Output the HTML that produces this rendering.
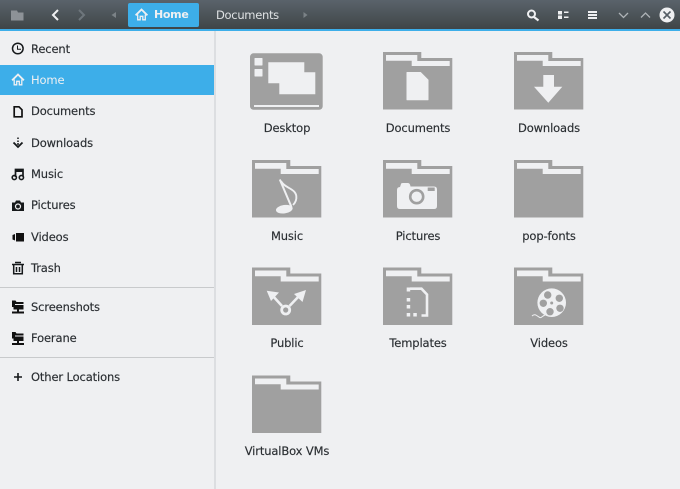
<!DOCTYPE html>
<html><head><meta charset="utf-8">
<style>
html,body{margin:0;padding:0}
body{width:680px;height:489px;overflow:hidden;position:relative;background:#eff0f2;font-family:"DejaVu Sans","Liberation Sans",sans-serif;font-size:11.5px;letter-spacing:-.13px;color:#2a2e32;-webkit-text-stroke:.15px #2a2e32}
.t{position:absolute;white-space:nowrap;line-height:16px}
.s{left:31px}
.l{width:130px;text-align:center}
svg{position:absolute;left:0;top:0}
</style></head><body>
<div style="position:absolute;left:0;top:0;width:680px;height:29px;background:linear-gradient(#5a636b,#3f4547)"></div>
<div style="position:absolute;left:0;top:29px;width:680px;height:2px;background:#3daee9"></div>
<div style="position:absolute;left:214px;top:31px;width:2px;height:458px;background:#dcdee1"></div>
<div style="position:absolute;left:0;top:65px;width:214px;height:30px;background:#3daee9"></div>
<div style="position:absolute;left:0;top:287px;width:214px;height:1px;background:#c8cacc"></div>
<div style="position:absolute;left:0;top:357px;width:214px;height:1px;background:#c8cacc"></div>
<div style="position:absolute;left:128px;top:3px;width:71px;height:24px;background:#3daee9;border-radius:2px"></div>

<svg width="680" height="489" viewBox="0 0 680 489">
<defs>
<g id="f">
<path d="M0 0H38.300V6H69.300V57.500H0Z" fill="#a0a0a0"/>
<path d="M3 3H34.300V9H66.700V14H28.700V8.700H3Z" fill="#eff0f2"/>
</g>
<g id="h" fill="none" stroke="#eff0f2">
<path d="M.6 6.800L6.500 1L12.400 6.800" stroke-width="1.800"/>
<path d="M2.700 6V11.300H5.200V7.800H7.800V11.300H10.300V6" stroke-width="1.300"/>
</g>
</defs>
<!-- header icons -->
<path d="M11 10.500H17L18 12.500H23.500V20.500H11Z" fill="#8d9297"/>
<path d="M58 10L53 15L58 20" fill="none" stroke="#eff0f2" stroke-width="2"/>
<path d="M79 10L84 15L79 20" fill="none" stroke="#6e767c" stroke-width="2"/>
<path d="M116 12V18L111.500 15Z" fill="#7b8287"/>
<path d="M303.500 12V18L307.500 15Z" fill="#7b8287"/>
<use href="#h" x="135" y="8.500"/>
<circle cx="531.500" cy="14" r="3.500" fill="none" stroke="#eff0f2" stroke-width="2"/>
<path d="M534 17L538.500 20.500" stroke="#eff0f2" stroke-width="2.200"/>
<path d="M558 11h4v3.500h-4zM558 15.500h4v3.500h-4zM564 11.500h4.500v1.500h-4.500zM564 16.500h4.500v1.500h-4.500z" fill="#eff0f2"/>
<path d="M588 11h9v2h-9zM588 14h9v2h-9zM588 17h9v2h-9z" fill="#eff0f2"/>
<path d="M619 13L623.500 17.500L628 13" fill="none" stroke="#aeb3b7" stroke-width="1.300"/>
<path d="M641 17.500L645.500 13L650 17.500" fill="none" stroke="#aeb3b7" stroke-width="1.300"/>
<circle cx="667" cy="15" r="7.500" fill="#eff0f2"/>
<path d="M663.500 11.500L670.500 18.500M670.500 11.500L663.500 18.500" stroke="#555e66" stroke-width="1.600"/>

<!-- sidebar icons -->
<circle cx="17.800" cy="48.500" r="5.300" fill="none" stroke="#16191b" stroke-width="1.500"/>
<path d="M17.500 45.500V49.200H21" fill="none" stroke="#16191b"/>
<use href="#h" x="11.500" y="73.500"/>
<path d="M14.200 106.800H19L22 109.800V116.800H14.200Z" fill="#eff0f2" stroke="#111" stroke-width="1.700"/>
<path d="M18 137.500V139M18 140.500V142M18 143V145" stroke="#16191b" stroke-width="1.500"/>
<path d="M13.500 142.500L18 147L22.500 142.500" fill="none" stroke="#16191b" stroke-width="1.800"/>
<path d="M15.500 177V169.500H23V176.500" fill="none" stroke="#16191b" stroke-width="1.700"/>
<path d="M15.500 171H23" stroke="#16191b" stroke-width="2"/>
<circle cx="14.300" cy="177.500" r="2.100" fill="none" stroke="#16191b" stroke-width="1.600"/>
<circle cx="21.400" cy="177.500" r="2.100" fill="none" stroke="#16191b" stroke-width="1.600"/>
<path d="M12 202.500H15L16 200.500H20L21 202.500H24V211H12Z" fill="#16191b"/>
<circle cx="18" cy="206.500" r="2.500" fill="none" stroke="#eff0f2" stroke-width="1.200"/>
<path d="M16 233H24V241.500H16Z M12.500 235L15 234V240.500L12.500 239.500Z" fill="#111"/>
<path d="M12 264.500H24M15 262.500H21" stroke="#16191b" stroke-width="1.600"/>
<path d="M13.700 265V273.700H22.300V265M16.500 267V272M19.500 267V272" fill="none" stroke="#16191b" stroke-width="1.500"/>
<g id="n" fill="#111">
<path d="M12 300.500H15.500L16.500 302H23.500V309.500H19V311.500H17V309.500H13.500V307H12Z"/>
<path d="M15 304H23.500V305H15Z" fill="#eff0f2"/>
<path d="M12 311.500H24V313.500H12Z"/>
</g>
<use href="#n" y="31.500"/>
<path d="M18 373V381M14 377H22" stroke="#16191b" stroke-width="1.600"/>

<!-- desktop -->
<rect x="250" y="53.300" width="72.700" height="56.500" rx="3.500" fill="#a0a0a0"/>
<g fill="#eff0f2">
<rect x="254.500" y="58" width="8" height="7.500" rx=".5"/>
<rect x="254.500" y="69" width="8" height="7.500" rx=".5"/>
<path d="M268.300 62.300H304.300V72.300H315.300V94.300H279.300V83.300H268.300Z"/>
<rect x="254" y="105" width="65" height="2"/>
</g>

<use href="#f" x="383" y="52"/>
<use href="#f" x="514" y="52"/>
<use href="#f" x="252" y="160"/>
<use href="#f" x="383" y="160"/>
<use href="#f" x="514" y="160"/>
<use href="#f" x="252" y="267.500"/>
<use href="#f" x="383" y="267.500"/>
<use href="#f" x="514" y="267.500"/>
<use href="#f" x="252" y="375.500"/>

<!-- documents -->
<path d="M407 72.500H420.500L428 80V99.700H407Z" fill="#eff0f2" stroke="#eff0f2" stroke-linejoin="round"/>
<!-- downloads -->
<path d="M543.300 75H554V86.700H562.300L548.300 102.700L534 86.700H543.300Z" fill="#eff0f2"/>
<!-- music -->
<ellipse cx="284.300" cy="209.200" rx="8.400" ry="4.200" fill="#eff0f2" transform="rotate(-8 284.300 209.200)"/>
<path d="M279.800 179.500L291.500 207" stroke="#eff0f2" stroke-width="2"/>
<path d="M281 181C284 188 295 188 296.300 196C296.800 200 295 203 293 205" fill="none" stroke="#eff0f2" stroke-width="1.900"/>
<!-- pictures -->
<path d="M397 190Q397 187 400 187L401 184Q401 183 403 183H408Q410 183 410.500 186.500H434Q437 186.500 437 189.500V206Q437 209 434 209H400Q397 209 397 206Z" fill="#eff0f2"/>
<circle cx="416.700" cy="196.700" r="6.500" fill="none" stroke="#a0a0a0" stroke-width="2.600"/>
<rect x="427.700" y="187.500" width="7" height="3.500" fill="#a0a0a0"/>
<!-- public -->
<circle cx="285.700" cy="310" r="4" fill="none" stroke="#eff0f2" stroke-width="2.800"/>
<path d="M282 306L272 295M289.500 306L300 295" stroke="#eff0f2" stroke-width="2.600"/>
<path d="M266.700 290.700L279 292.500L271 301Z M306 290L302.500 302L294 294Z" fill="#eff0f2"/>
<!-- templates -->
<path d="M410 288.700H421.500L427 294.500V315.500H421.500" fill="none" stroke="#eff0f2" stroke-width="2.600"/>
<path d="M406.700 287.500h3.500v4h-3.500zM406.700 298h3.500v3.500h-3.500zM406.700 305h3.500v3.500h-3.500zM406.700 313h3.500v3.500h-3.500zM413.300 313h3.500v3.500h-3.500z" fill="#eff0f2"/>
<!-- videos -->
<circle cx="551.700" cy="302.700" r="14.300" fill="#eff0f2"/>
<g fill="#a0a0a0">
<circle cx="551.700" cy="303" r="1.500"/>
<circle cx="547.700" cy="295" r="3.700"/>
<circle cx="559.300" cy="298.300" r="3.700"/>
<circle cx="543.300" cy="303.300" r="3.700"/>
<circle cx="550" cy="311.700" r="3.700"/>
<circle cx="560" cy="308.300" r="3.700"/>
</g>
<path d="M532 316C535 313 537 316 539 317C541 319 542 316 545 315" fill="none" stroke="#eff0f2" stroke-width="1"/>
</svg>

<div class="t" style="left:154px;top:7px;color:#eff0f2;-webkit-text-stroke:0;font-weight:bold;font-size:11px;letter-spacing:-.3px">Home</div>
<div class="t" style="left:216px;top:7px;color:#dfe2e4;-webkit-text-stroke:0;letter-spacing:-.3px">Documents</div>

<div class="t s" style="top:41px">Recent</div>
<div class="t s" style="top:72px;color:#eff0f2;-webkit-text-stroke:0">Home</div>
<div class="t s" style="top:103px">Documents</div>
<div class="t s" style="top:134.500px">Downloads</div>
<div class="t s" style="top:166px">Music</div>
<div class="t s" style="top:197px">Pictures</div>
<div class="t s" style="top:228.500px">Videos</div>
<div class="t s" style="top:260px">Trash</div>
<div class="t s" style="top:298.500px">Screenshots</div>
<div class="t s" style="top:330px">Foerane</div>
<div class="t s" style="top:369px">Other Locations</div>

<div class="t l" style="left:222px;top:120px">Desktop</div>
<div class="t l" style="left:353px;top:120px">Documents</div>
<div class="t l" style="left:484px;top:120px">Downloads</div>
<div class="t l" style="left:222px;top:228px">Music</div>
<div class="t l" style="left:353px;top:228px">Pictures</div>
<div class="t l" style="left:484px;top:228px">pop-fonts</div>
<div class="t l" style="left:222px;top:335px">Public</div>
<div class="t l" style="left:353px;top:335px">Templates</div>
<div class="t l" style="left:484px;top:335px">Videos</div>
<div class="t l" style="left:222px;top:443px">VirtualBox VMs</div>
</body></html>
